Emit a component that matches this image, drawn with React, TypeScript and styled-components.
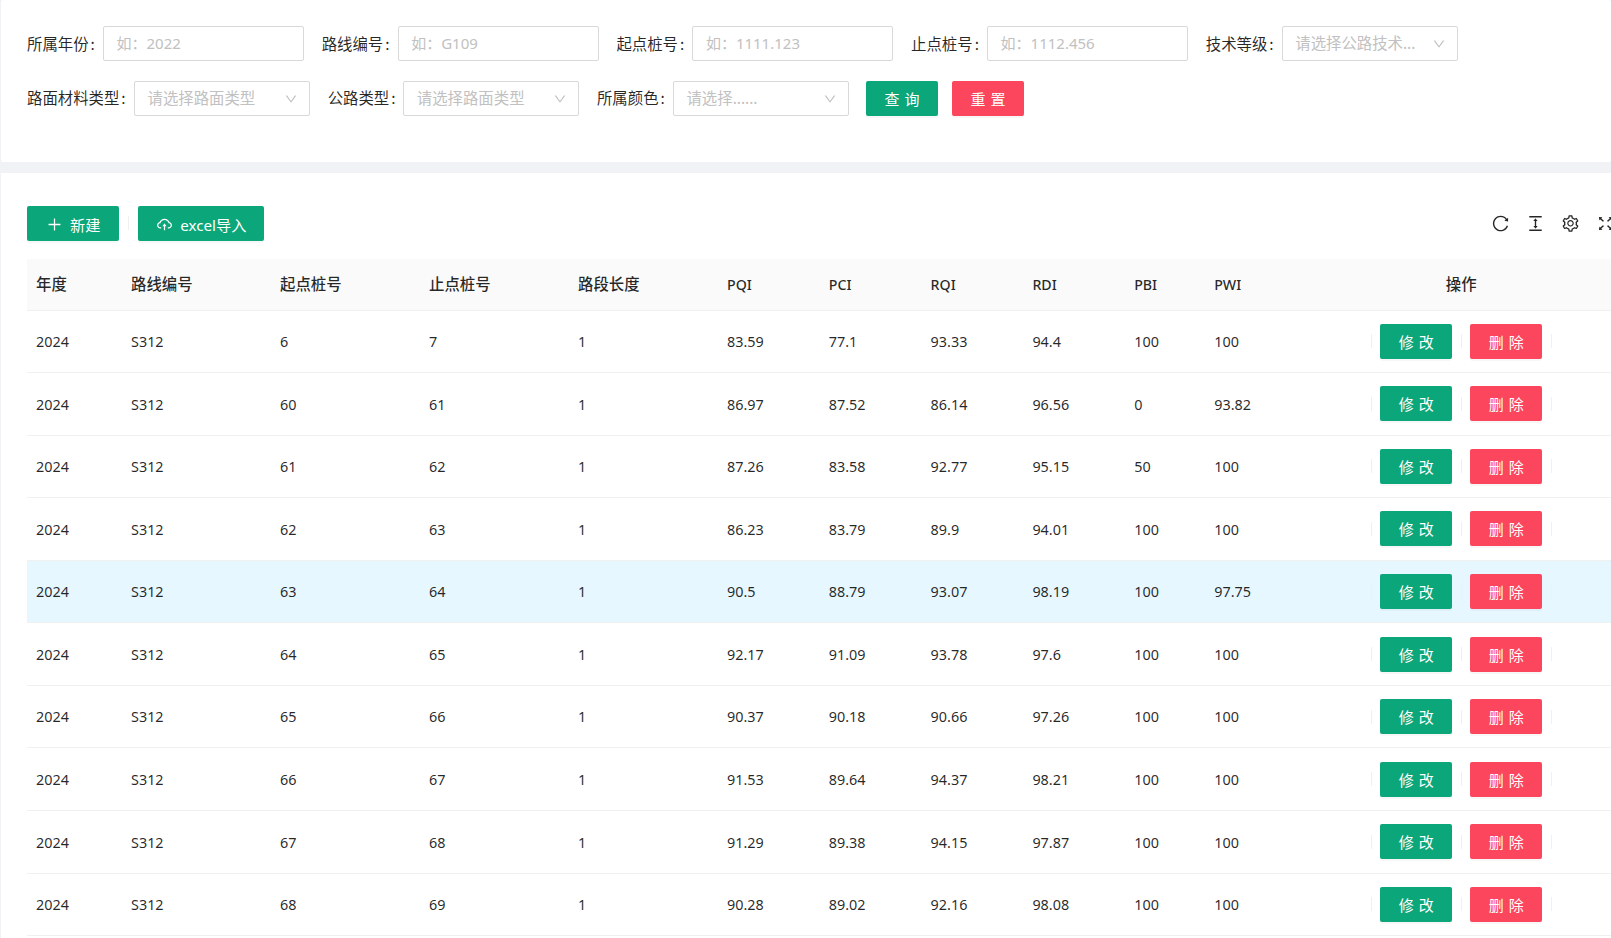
import React from 'react';
import styled, { createGlobalStyle } from 'styled-components';
import {
	AiOutlineCloudUpload,
	AiOutlineColumnHeight,
	AiOutlineDown,
	AiOutlineFullscreen,
	AiOutlinePlus,
	AiOutlineReload,
	AiOutlineSetting,
} from 'react-icons/ai';

const GREEN = '#0ba679';
const RED = '#fc465d';
const FONT = '"Noto Sans", "Noto Sans CJK SC", sans-serif';

const GlobalStyle = createGlobalStyle`
	html, body {
		margin: 0;
		padding: 0;
		background: #f0f2f5;
		overflow: hidden;
	}
	* {
		box-sizing: border-box;
	}
`;

const Page = styled.div`
	width: 1611px;
	height: 938px;
	overflow: hidden;
	padding-left: 1px;
	font-family: ${FONT};
	font-size: 14.4px;
	color: rgba(0, 0, 0, 0.85);
`;

const FilterPanel = styled.section`
	height: 161.5px;
	padding: 26px 0 0 26px;
	background: #fff;
	border-radius: 2px;
	display: flex;
	flex-direction: column;
	gap: 19.5px;
`;

const FilterRow = styled.div`
	display: flex;
	align-items: center;
	gap: 17.7px;
`;

const Field = styled.label`
	display: flex;
	align-items: center;
`;

const FieldLabel = styled.span<{ $width: number }>`
	width: ${({ $width }) => $width}px;
	padding-bottom: 2px;
	font-size: 15.4px;
	white-space: nowrap;
	font-family: "Noto Sans CJK SC", sans-serif;
`;

const Colon = styled.span`
	margin-left: 2px;
`;

const TextBox = styled.div<{ $width: number; $size?: number }>`
	width: ${({ $width }) => $width}px;
	height: 35px;
	padding: 0 13px 2px 12.5px;
	display: flex;
	align-items: center;
	justify-content: space-between;
	border: 1px solid #d9d9d9;
	border-radius: 2px;
	background: #fff;
	color: #c1c1c1;
	font-size: ${({ $size }) => $size ?? 15.4}px;
	white-space: nowrap;
`;

const Arrow = styled(AiOutlineDown)`
	width: 14px;
	height: 14px;
	margin-top: 3px;
	margin-right: -1.8px;
	color: #bfbfbf;
`;

const Button = styled.button<{ $danger?: boolean; $width: number }>`
	width: ${({ $width }) => $width}px;
	height: 35px;
	padding: 0;
	display: inline-flex;
	align-items: center;
	justify-content: center;
	flex: none;
	border: none;
	border-radius: 2px;
	background: ${({ $danger }) => ($danger ? RED : GREEN)};
	box-shadow: 0 2px 0 rgba(0, 0, 0, 0.03);
	color: #fff;
	font-family: ${FONT};
	font-size: 15px;
	white-space: nowrap;
`;

const Spaced = styled.span`
	letter-spacing: 0.34em;
	margin-right: -0.34em;
`;

const QueryButtons = styled.div`
	display: flex;
	gap: 14px;
	margin-left: -0.6px;
`;

const TablePanel = styled.section`
	margin-top: 11px;
	height: 770px;
	padding: 33px 0 0 26px;
	background: #fff;
	overflow: hidden;
`;

const Toolbar = styled.div`
	width: 1588px;
	height: 35px;
	margin-bottom: 18px;
	display: flex;
	align-items: center;
	justify-content: space-between;
`;

const ToolbarActions = styled.div`
	display: flex;
	align-items: center;
	gap: 9px;
`;

const ToolbarIcons = styled.div`
	display: flex;
	align-items: center;
	gap: 16px;
	color: rgba(0, 0, 0, 0.85);

	svg {
		display: block;
		width: 19px;
		height: 19px;
	}
`;

const ButtonLabel = styled.span`
	display: inline-flex;
	align-items: center;
	gap: 7.5px;
	margin-top: 2px;
	font-size: 15.2px;

	svg {
		width: 17px;
		height: 17px;
	}
`;

const Separator = styled.span`
	width: 1px;
	height: 14px;
	flex: none;
	background: #f0f0f0;
`;

const Table = styled.table`
	width: 1587.2px;
	table-layout: fixed;
	border-collapse: separate;
	border-spacing: 0;
`;

const Col = styled.col<{ $width: number }>`
	width: ${({ $width }) => $width}px;
`;

const HeadCell = styled.th<{ $center?: boolean; $latin?: boolean }>`
	height: 52px;
	padding: ${({ $latin }) => ($latin ? '1px 9px 0' : '0 9px 1px')};
	background: #fafafa;
	border-bottom: 1px solid #f0f0f0;
	font-size: ${({ $latin }) => ($latin ? 14.2 : 15.4)}px;
	font-weight: 500;
	text-align: ${({ $center }) => ($center ? 'center' : 'left')};
`;

const BodyRow = styled.tr<{ $active?: boolean }>`
	height: 62.57px;
	background: ${({ $active }) => ($active ? '#e6f7ff' : '#fff')};
`;

const BodyCell = styled.td`
	padding: 0.6px 9px 0;
	border-bottom: 1px solid #f0f0f0;
`;

const RowActions = styled.div`
	display: flex;
	align-items: center;
	justify-content: center;
	gap: 8.5px;
	margin-top: -0.6px;
`;

const columns = [
	{ title: '年度', width: 95 },
	{ title: '路线编号', width: 149 },
	{ title: '起点桩号', width: 149 },
	{ title: '止点桩号', width: 149 },
	{ title: '路段长度', width: 149 },
	{ title: 'PQI', width: 101.8, latin: true },
	{ title: 'PCI', width: 101.8, latin: true },
	{ title: 'RQI', width: 101.8, latin: true },
	{ title: 'RDI', width: 101.8, latin: true },
	{ title: 'PBI', width: 80, latin: true },
	{ title: 'PWI', width: 103, latin: true },
];

const rows = [
	['2024', 'S312', '6', '7', '1', '83.59', '77.1', '93.33', '94.4', '100', '100'],
	['2024', 'S312', '60', '61', '1', '86.97', '87.52', '86.14', '96.56', '0', '93.82'],
	['2024', 'S312', '61', '62', '1', '87.26', '83.58', '92.77', '95.15', '50', '100'],
	['2024', 'S312', '62', '63', '1', '86.23', '83.79', '89.9', '94.01', '100', '100'],
	['2024', 'S312', '63', '64', '1', '90.5', '88.79', '93.07', '98.19', '100', '97.75'],
	['2024', 'S312', '64', '65', '1', '92.17', '91.09', '93.78', '97.6', '100', '100'],
	['2024', 'S312', '65', '66', '1', '90.37', '90.18', '90.66', '97.26', '100', '100'],
	['2024', 'S312', '66', '67', '1', '91.53', '89.64', '94.37', '98.21', '100', '100'],
	['2024', 'S312', '67', '68', '1', '91.29', '89.38', '94.15', '97.87', '100', '100'],
	['2024', 'S312', '68', '69', '1', '90.28', '89.02', '92.16', '98.08', '100', '100'],
];

const ACTIVE_ROW = 4;

export default function App() {
	return (
		<Page>
			<GlobalStyle />
			<FilterPanel>
				<FilterRow>
					<Field>
						<FieldLabel $width={76}>所属年份<Colon>:</Colon></FieldLabel>
						<TextBox $width={201} $size={15}>如：2022</TextBox>
					</Field>
					<Field>
						<FieldLabel $width={76}>路线编号<Colon>:</Colon></FieldLabel>
						<TextBox $width={201} $size={15}>如：G109</TextBox>
					</Field>
					<Field>
						<FieldLabel $width={76}>起点桩号<Colon>:</Colon></FieldLabel>
						<TextBox $width={201} $size={15}>如：1111.123</TextBox>
					</Field>
					<Field>
						<FieldLabel $width={76}>止点桩号<Colon>:</Colon></FieldLabel>
						<TextBox $width={201} $size={15}>如：1112.456</TextBox>
					</Field>
					<Field>
						<FieldLabel $width={76}>技术等级<Colon>:</Colon></FieldLabel>
						<TextBox $width={176}>
							请选择公路技术...
							<Arrow />
						</TextBox>
					</Field>
				</FilterRow>
				<FilterRow>
					<Field>
						<FieldLabel $width={107}>路面材料类型<Colon>:</Colon></FieldLabel>
						<TextBox $width={176}>
							请选择路面类型
							<Arrow />
						</TextBox>
					</Field>
					<Field>
						<FieldLabel $width={75.6}>公路类型<Colon>:</Colon></FieldLabel>
						<TextBox $width={176}>
							请选择路面类型
							<Arrow />
						</TextBox>
					</Field>
					<Field>
						<FieldLabel $width={76}>所属颜色<Colon>:</Colon></FieldLabel>
						<TextBox $width={176}>
							请选择......
							<Arrow />
						</TextBox>
					</Field>
					<QueryButtons>
						<Button $width={72}>
							<Spaced>查询</Spaced>
						</Button>
						<Button $width={72} $danger>
							<Spaced>重置</Spaced>
						</Button>
					</QueryButtons>
				</FilterRow>
			</FilterPanel>
			<TablePanel>
				<Toolbar>
					<ToolbarActions>
						<Button $width={92}>
							<ButtonLabel>
								<AiOutlinePlus />
								新建
							</ButtonLabel>
						</Button>
						<Separator />
						<Button $width={126}>
							<ButtonLabel>
								<AiOutlineCloudUpload />
								excel导入
							</ButtonLabel>
						</Button>
					</ToolbarActions>
					<ToolbarIcons>
						<AiOutlineReload />
						<AiOutlineColumnHeight />
						<AiOutlineSetting />
						<AiOutlineFullscreen />
					</ToolbarIcons>
				</Toolbar>
				<Table>
					<colgroup>
						{columns.map(column => (
							<Col key={column.title} $width={column.width} />
						))}
						<Col $width={306} />
					</colgroup>
					<thead>
						<tr>
							{columns.map(column => (
								<HeadCell key={column.title} $latin={column.latin}>
									{column.title}
								</HeadCell>
							))}
							<HeadCell $center>操作</HeadCell>
						</tr>
					</thead>
					<tbody>
						{rows.map((row, index) => (
							<BodyRow key={row[2]} $active={index === ACTIVE_ROW}>
								{row.map((value, cell) => (
									<BodyCell key={cell}>{value}</BodyCell>
								))}
								<BodyCell>
									<RowActions>
										<Separator />
										<Button $width={72}>
											<Spaced>修改</Spaced>
										</Button>
										<Separator />
										<Button $width={72} $danger>
											<Spaced>删除</Spaced>
										</Button>
										<Separator />
									</RowActions>
								</BodyCell>
							</BodyRow>
						))}
					</tbody>
				</Table>
			</TablePanel>
		</Page>
	);
}
